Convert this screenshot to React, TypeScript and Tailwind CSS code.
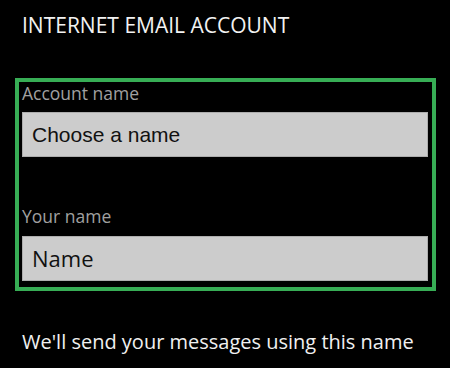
import React from 'react';

const segoe = { fontFamily: '"Open Sans", "Noto Sans", sans-serif' };

const Field = ({ label, value, arial, first }: { label: string; value: string; arial?: boolean; first?: boolean }) => (
  <div className={first ? '' : 'mt-[48px]'}>
    <div className="text-[17.5px] leading-[22px] text-[#a0a0a0] font-['Open_Sans',sans-serif]">{label}</div>
    <div className={`${first ? 'mt-[8px]' : 'mt-[9px]'} h-[45px] bg-[#cccccc] border border-[#adadad] flex items-center pl-[9px]`}>
      {arial ? (
        <span className="text-[21px] text-[#111] font-['Liberation_Sans',Arial,sans-serif]">{value}</span>
      ) : (
        <span className="text-[22px] text-[#111] font-['Open_Sans',sans-serif]">{value}</span>
      )}
    </div>
  </div>
);

export default function App() {
  return (
    <div className="w-[450px] h-[368px] bg-black overflow-hidden" style={segoe}>
      <h1 className="pt-[11px] pl-[22px] text-[21px] leading-[28px] text-[#f2f2f2] font-normal">
        INTERNET EMAIL ACCOUNT
      </h1>

      <div className="mt-[39px] ml-[15px] w-[421px] h-[213px] border-4 border-[#37ad55] pl-[3px] pr-[4px] pb-[6px]">
        <Field first label="Account name" value="Choose a name" arial />
        <Field label="Your name" value="Name" />
      </div>

      <p className="mt-[38px] pl-[22px] text-[20px] leading-[26px] text-[#f0f0f0]">
        We'll send your messages using this name
      </p>
    </div>
  );
}
